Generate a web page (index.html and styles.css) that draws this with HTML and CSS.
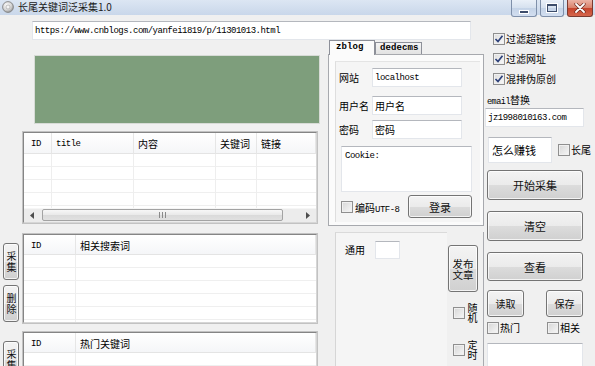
FILE: index.html
```html
<!DOCTYPE html>
<html lang="zh-CN">
<head>
<meta charset="utf-8">
<title>长尾关键词泛采集1.0</title>
<link rel="stylesheet" href="styles.css">
</head>
<body>
<div class="window">
  <div class="titlebar">
    <svg class="appicon" width="12" height="12" viewBox="0 0 12 12">
      <defs>
        <radialGradient id="ig" cx="0.4" cy="0.35" r="0.7">
          <stop offset="0" stop-color="#ffffff"/>
          <stop offset="0.6" stop-color="#d4d4d4"/>
          <stop offset="1" stop-color="#8c8c8c"/>
        </radialGradient>
      </defs>
      <circle cx="6" cy="6" r="5.4" fill="url(#ig)" stroke="#7a7a7a" stroke-width="0.8"/>
      <circle cx="6" cy="6" r="2" fill="#f4f4f4" stroke="#a0a0a0" stroke-width="0.6"/>
    </svg>
    <span class="title">长尾关键词泛采集1.0</span>
    <div class="winbtns">
      <div class="wb wb-min"><span class="g-min"></span></div>
      <div class="wb wb-max"><span class="g-max"></span></div>
      <div class="wb wb-close">
        <svg width="12" height="10" viewBox="0 0 12 10">
          <path d="M2 1 L10 9 M10 1 L2 9" stroke="#6b2a20" stroke-width="3.2" stroke-linecap="round"/>
          <path d="M2 1 L10 9 M10 1 L2 9" stroke="#ffffff" stroke-width="1.8" stroke-linecap="round"/>
        </svg>
      </div>
    </div>
  </div>

  <div class="client">
    <div class="lm">
      <div class="urlrow">
        <div class="textbox url mono">https://www.cnblogs.com/yanfei1819/p/11301013.html</div>
      </div>
      <div class="cols">
        <div class="left">
          <div class="green"></div>

          <div class="listview lv1">
            <div class="lv-inner">
              <div class="lv-grid">
                <div class="h h-id mono">ID</div>
                <div class="h mono">title</div>
                <div class="h">内容</div>
                <div class="h">关键词</div>
                <div class="h">链接</div>
                <div class="b"></div><div class="b"></div><div class="b"></div><div class="b"></div><div class="b b-last"></div>
              </div>
              <div class="hscroll">
                <div class="sarrow"><svg width="4" height="7" viewBox="0 0 4 7"><path d="M4 0 L0 3.5 L4 7Z" fill="#4d4d4d"/></svg></div>
                <div class="track">
                  <div class="thumb"><svg width="7" height="6" viewBox="0 0 7 6"><path d="M0.5 0 V6 M3.5 0 V6 M6.5 0 V6" stroke="#8a8a8a" stroke-width="1"/></svg></div>
                </div>
                <div class="sarrow"><svg width="4" height="7" viewBox="0 0 4 7"><path d="M0 0 L4 3.5 L0 7Z" fill="#4d4d4d"/></svg></div>
              </div>
            </div>
          </div>

          <div class="lower">
            <div class="sidebtns">
              <div class="btn vbtn"><span class="vert">采集</span></div>
              <div class="btn vbtn"><span class="vert">删除</span></div>
            </div>
            <div class="listview lv2">
              <div class="lv-inner">
                <div class="lv-grid g2">
                  <div class="h h-id mono">ID</div>
                  <div class="h">相关搜索词</div>
                  <div class="b"></div><div class="b b-last"></div>
                </div>
              </div>
            </div>
            <div class="sidebtns">
              <div class="btn vbtn"><span class="vert">采集</span></div>
            </div>
            <div class="listview lv3">
              <div class="lv-inner">
                <div class="lv-grid g2">
                  <div class="h h-id mono">ID</div>
                  <div class="h">热门关键词</div>
                  <div class="b"></div><div class="b b-last"></div>
                </div>
              </div>
            </div>
          </div>
        </div>

        <div class="mid">
          <div class="tabstrip">
            <div class="tab sel">zblog</div>
            <div class="tab">dedecms</div>
          </div>
          <div class="tabpage">
            <div class="tabinner">
              <div class="frow frow1"><span class="flabel">网站</span><div class="textbox ftb mono">localhost</div></div>
              <div class="frow frow2"><span class="flabel">用户名</span><div class="textbox ftb">用户名</div></div>
              <div class="frow frow3"><span class="flabel">密码</span><div class="textbox ftb">密码</div></div>
              <div class="textbox cookie mono">Cookie:</div>
              <div class="loginrow">
                <span class="cb"></span>
                <span class="cblabel">编码<span class="mono">UTF-8</span></span>
                <div class="btn loginbtn">登录</div>
              </div>
            </div>
          </div>
          <div class="midlower">
            <div class="tongyong">
              <span class="tylabel">通用</span>
              <div class="textbox tybox"></div>
            </div>
            <div class="pubcol">
              <div class="btn pubbtn"><span class="vert pubtext">发布文章</span></div>
              <div class="vchk vchk1"><span class="cb"></span><span class="vert vtext">随机</span></div>
              <div class="vchk vchk2"><span class="cb"></span><span class="vert vtext">定时</span></div>
            </div>
          </div>
        </div>
      </div>
    </div>

    <div class="right">
      <div class="chkrow"><span class="cb checked"><svg width="10" height="10" viewBox="0 0 10 10"><path d="M1.5 5 L4 7.5 L8.5 1.8" fill="none" stroke="#2d417a" stroke-width="1.7"/></svg></span><span class="cbt">过滤超链接</span></div>
      <div class="chkrow"><span class="cb checked"><svg width="10" height="10" viewBox="0 0 10 10"><path d="M1.5 5 L4 7.5 L8.5 1.8" fill="none" stroke="#2d417a" stroke-width="1.7"/></svg></span><span class="cbt">过滤网址</span></div>
      <div class="chkrow"><span class="cb checked"><svg width="10" height="10" viewBox="0 0 10 10"><path d="M1.5 5 L4 7.5 L8.5 1.8" fill="none" stroke="#2d417a" stroke-width="1.7"/></svg></span><span class="cbt">混排伪原创</span></div>
      <div class="emaillabel"><span class="mono small">email</span>替换</div>
      <div class="textbox emailbox mono">jz1998010163.com</div>
      <div class="zmrow">
        <div class="textbox zmbox">怎么赚钱</div>
        <span class="cb"></span><span class="cbt">长尾</span>
      </div>
      <div class="btn bigbtn b-start">开始采集</div>
      <div class="btn bigbtn b-clear">清空</div>
      <div class="btn bigbtn b-view">查看</div>
      <div class="rsrow">
        <div class="btn smbtn">读取</div>
        <div class="btn smbtn">保存</div>
      </div>
      <div class="hrow">
        <div class="hcell"><span class="cb"></span><span class="cbt">热门</span></div>
        <div class="hcell"><span class="cb"></span><span class="cbt">相关</span></div>
      </div>
      <div class="textbox bottombox"></div>
    </div>
  </div>
</div>
</body>
</html>
```

FILE: styles.css
```css
* { box-sizing: border-box; margin: 0; padding: 0; }
html, body { width: 595px; height: 366px; overflow: hidden; }
body {
  background: #f0f0f0;
  font-family: "Noto Sans CJK SC", "Noto Sans", sans-serif;
  font-size: 10px;
  line-height: 12px;
  color: #000;
}
.mono {
  font-family: "Liberation Mono", "Noto Sans CJK SC", monospace;
  font-size: 9px;
  letter-spacing: -0.5px;
}
.small { font-size: 8.5px; }
.vert {
  writing-mode: vertical-rl;
  text-orientation: upright;
  white-space: nowrap;
}

.window { width: 595px; height: 366px; display: flex; flex-direction: column; overflow: hidden; }

/* title bar */
.titlebar {
  height: 15px; flex: none; display: flex; align-items: flex-start;
  background: linear-gradient(#dce6f3, #c9d7ea);
  position: relative; z-index: 2;
}
.appicon { margin: 1px 0 0 2px; flex: none; }
.title { margin-left: 4px; font-size: 10px; line-height: 14px; color: #1a1a1a; }
.winbtns { margin-left: auto; margin-right: 2px; display: flex; gap: 3px; height: 17px; }
.wb {
  height: 17px; border: 1px solid #7f90aa; border-top: none; border-radius: 0 0 3px 3px;
  background: linear-gradient(#eaf0f8, #d6e1ef 50%, #c4d3e7 51%, #d3dff0);
  display: flex; align-items: center; justify-content: center;
}
.wb-min { width: 26px; }
.wb-max { width: 24px; }
.wb-close {
  width: 26px; border-color: #7b3a30;
  background: linear-gradient(#ecb4a6, #d98069 50%, #c6442c 51%, #d5664c);
}
.g-min { width: 10px; height: 4px; background: #3d4d6b; border: 1px solid #fff; margin-top: 7px; }
.g-max { width: 10px; height: 8px; border: 1px solid #3d4d6b; border-top-width: 2px; background: transparent; box-shadow: 0 0 0 1px #fff; }

/* client */
.client { flex: 1; display: flex; }
.lm { width: 484px; display: flex; flex-direction: column; }
.urlrow { height: 25px; padding: 6px 0 0 32px; flex: none; }
.textbox {
  background: #fff;
  border: 1px solid #e3e6eb;
  border-top-color: #b4b7bd;
  display: flex; align-items: center; padding-left: 2px;
  white-space: nowrap; overflow: hidden;
}
.url { width: 439px; height: 19px; }

.cols { flex: 1; display: flex; }

/* left column */
.left { width: 326px; padding-top: 15px; display: flex; flex-direction: column; }
.green { margin-left: 34px; width: 286px; height: 69px; background: #7e9e7c; border: 1px solid #d7dbd6; flex: none; }

.listview { width: 296px; background: #fff; border: 1px solid #c2c2c2; flex: none; }
.lv-inner {
  height: 100%; display: flex; flex-direction: column;
  border: 1px solid; border-color: #858585 #d6d6d6 #d6d6d6 #858585;
}
.lv1 { margin: 7px 0 0 22px; height: 93px; }
.lv-grid { flex: 1; display: grid; grid-template-rows: 21px 1fr; grid-template-columns: 28px 82px 82px 41px 1fr; }
.g2 { grid-template-columns: 52px 1fr; grid-template-rows: 20px 1fr; }
.h {
  background: linear-gradient(#ffffff, #f5f6f8);
  border-right: 1px solid #e6e6e6; border-bottom: 1px solid #e4e4e4;
  padding: 2px 0 0 4px; display: flex; align-items: center; white-space: nowrap;
}
.h-id { padding-left: 7px; }
.b {
  border-right: 1px solid #eeeeee;
  background: repeating-linear-gradient(to bottom, transparent 0 12px, #efefef 12px 13px);
}
.b-last { border-right: none; }
.hscroll { height: 14px; display: flex; background: #ececec; border-top: 1px solid #f6f6f6; flex: none; }
.sarrow { width: 16px; display: flex; align-items: center; justify-content: center; }
.track { flex: 1; padding: 0 0 0 2px; }
.thumb {
  width: 241px; height: 12px; border: 1px solid #a3a3a3; border-radius: 2px;
  background: linear-gradient(#f7f7f7, #e9e9e9 50%, #dadada 51%, #e1e1e1);
  display: flex; align-items: center; justify-content: center;
}

.lower { margin-top: 9px; display: grid; grid-template-columns: 22px 296px; row-gap: 7px; }
.sidebtns { display: flex; flex-direction: column; gap: 5px; padding: 10px 0 0 3px; }
.lv2 { height: 91px; }
.lv3 { height: 60px; }

/* buttons */
.btn {
  border: 1px solid #747474; border-radius: 3px;
  background: linear-gradient(#f3f3f3, #ebebeb 50%, #dcdcdc 51%, #d0d0d0);
  box-shadow: inset 0 0 0 1px rgba(255,255,255,0.75);
  display: flex; align-items: center; justify-content: center; text-align: center;
  font-size: 11px; line-height: 12px; color: #111;
}
.vbtn {
  width: 16px; height: 37px; flex: none;
  font-size: 10px; line-height: 12px;
}
.vbtn .vert { letter-spacing: 1px; }

/* middle column */
.mid { width: 158px; display: flex; flex-direction: column; }
.tabstrip { height: 14px; display: flex; align-items: flex-end; padding-left: 3px; position: relative; z-index: 1; flex: none; }
.tab {
  height: 12px; border: 1px solid #8d9099; border-bottom: none;
  background: linear-gradient(#f4f4f4, #e2e2e2);
  font-family: "Liberation Mono", monospace; font-weight: bold; font-size: 9px; letter-spacing: 0.1px;
  line-height: 11px; padding-left: 4px; width: 47px;
}
.tab.sel { height: 15px; margin-bottom: -1px; background: #fbfbfb; width: 46px; line-height: 13px; padding-left: 6px; }
.tabpage {
  margin-left: 2px; width: 156px; height: 172px; flex: none;
  border: 1px solid #a7a9ae; background: #fbfbfb;
  padding: 6px 3px 3px 6px;
}
.tabinner {
  height: 100%; border-left: 1px solid #dedede; border-top: 1px solid #e4e4e4;
  background: #f5f5f5; padding: 6px 0 0 3px;
}
.frow { display: flex; align-items: center; height: 19px; }
.frow2 { margin-top: 9px; }
.frow3 { margin-top: 5px; }
.flabel { width: 33px; white-space: nowrap; }
.ftb { width: 90px; height: 19px; }
.cookie { margin: 7px 0 0 2px; width: 131px; height: 46px; align-items: flex-start; padding: 3px 0 0 3px; }
.loginrow { margin-top: 3px; width: 133px; height: 23px; display: flex; align-items: center; padding-left: 2px; }
.cblabel { margin-left: 2px; padding-top: 5px; white-space: nowrap; }
.loginbtn { margin-left: auto; width: 64px; height: 23px; }

.midlower { flex: 1; margin-top: 6px; display: flex; }
.tongyong {
  margin-left: 9px; width: 112px;
  border-left: 1px solid #d6d6d6; border-top: 1px solid #dadada;
  background: #f5f5f5; padding: 8px 0 0 9px;
  display: flex; align-items: flex-start;
}
.tylabel { width: 30px; line-height: 18px; }
.tybox { width: 25px; height: 18px; }
.pubcol { width: 37px; padding-left: 1px; border-right: 1px solid #a9abb0; display: flex; flex-direction: column; }
.pubbtn { margin-top: 13px; width: 30px; height: 47px; flex: none; }
.pubtext {
  writing-mode: horizontal-tb; white-space: normal;
  width: 22px; font-size: 10.5px; line-height: 11px; word-break: break-all;
}
.vchk { display: flex; align-items: center; height: 22px; padding-left: 5px; }
.vchk1 { margin-top: 10px; }
.vchk2 { margin-top: 15px; }
.vtext { margin-left: 1px; font-size: 10px; line-height: 12px; }

/* checkbox */
.cb {
  width: 12px; height: 12px; flex: none;
  border: 1px solid #8f8f8f;
  background: linear-gradient(135deg, #d6d6d6, #f7f7f7);
  box-shadow: inset 0 0 0 1px #f0f0f0;
  display: inline-flex; align-items: center; justify-content: center;
}
.cb.checked { background: linear-gradient(135deg, #dcdcdc, #fafafa); }

/* right column */
.right { width: 111px; padding-top: 14px; display: flex; flex-direction: column; }
.chkrow { height: 20px; display: flex; align-items: center; padding-left: 9px; }
.cbt { margin-left: 1px; white-space: nowrap; }
.emaillabel { margin-top: 6px; padding-left: 3px; line-height: 10px; height: 10px; white-space: nowrap; }
.emailbox { margin: 3px 0 0 1px; width: 99px; height: 19px; }
.zmrow { margin-top: 10px; height: 26px; display: flex; align-items: center; }
.zmbox { margin-left: 4px; width: 64px; height: 26px; font-size: 11px; padding-left: 3px; margin-right: 6px; }
.bigbtn { margin: 7px 0 0 3px; width: 96px; height: 30px; flex: none; }
.b-clear, .b-view { margin-top: 11px; }
.b-view { height: 29px; }
.rsrow { margin-top: 9px; padding-left: 3px; display: flex; gap: 22px; }
.smbtn { width: 37px; height: 27px; font-size: 10px; }
.hrow { margin-top: 4px; height: 14px; padding-left: 3px; display: grid; grid-template-columns: 60px 40px; }
.hcell { display: flex; align-items: center; }
.bottombox { margin: 8px 0 0 3px; width: 96px; height: 40px; flex: none; }
```
